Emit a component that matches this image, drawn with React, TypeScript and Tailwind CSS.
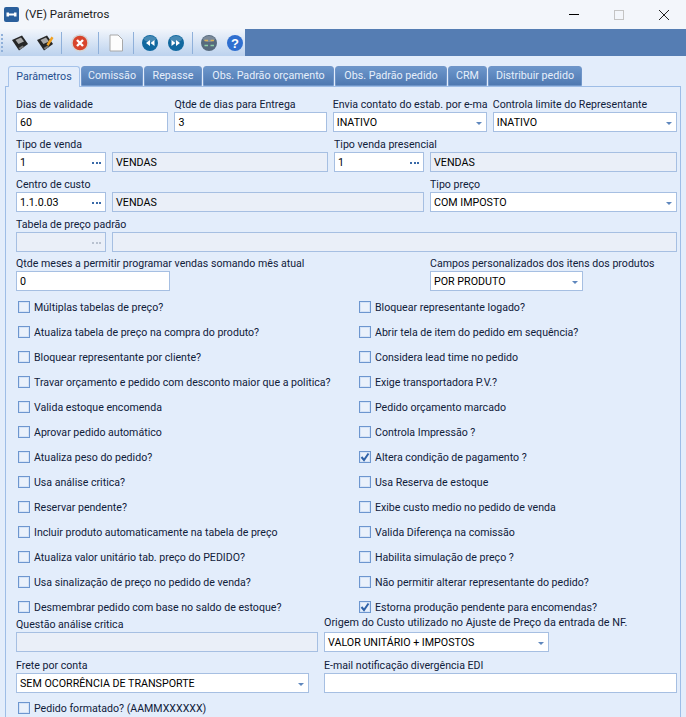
const FONT = "font-['Roboto',sans-serif]";

const TABS = [
  { label: 'Parâmetros', width: 'w-[72px]', active: true },
  { label: 'Comissão', width: 'w-[62px]' },
  { label: 'Repasse', width: 'w-[58px]' },
  { label: 'Obs. Padrão orçamento', width: 'w-[131px]' },
  { label: 'Obs. Padrão pedido', width: 'w-[112px]' },
  { label: 'CRM', width: 'w-[39px]' },
  { label: 'Distribuir pedido', width: 'w-[94px]' },
];

const CHECKS: [string, boolean, string, boolean][] = [
  ['Múltiplas tabelas de preço?', false, 'Bloquear representante logado?', false],
  ['Atualiza tabela de preço na compra do produto?', false, 'Abrir tela de item do pedido em sequência?', false],
  ['Bloquear representante por cliente?', false, 'Considera lead time no pedido', false],
  ['Travar orçamento e pedido com desconto maior que a politica?', false, 'Exige transportadora P.V.?', false],
  ['Valida estoque encomenda', false, 'Pedido orçamento marcado', false],
  ['Aprovar pedido automático', false, 'Controla Impressão ?', false],
  ['Atualiza peso do pedido?', false, 'Altera condição de pagamento ?', true],
  ['Usa análise critica?', false, 'Usa Reserva de estoque', false],
  ['Reservar pendente?', false, 'Exibe custo medio no pedido de venda', false],
  ['Incluir produto automaticamente na tabela de preço', false, 'Valida Diferença na comissão', false],
  ['Atualiza valor unitário tab. preço do PEDIDO?', false, 'Habilita simulação de preço ?', false],
  ['Usa sinalização de preço no pedido de venda?', false, 'Não permitir alterar representante do pedido?', false],
  ['Desmembrar pedido com base no saldo de estoque?', false, 'Estorna produção pendente para encomendas?', true],
];

function Label({ text, className = 'h-[14px]' }: { text: string; className?: string }) {
  return <div className={`text-[10.6px] leading-[14px] whitespace-nowrap text-[#10203a] ${className}`}>{text}</div>;
}

function TextBox({ value = '', disabled = false, className = '' }: { value?: string; disabled?: boolean; className?: string }) {
  return (
    <div className={`flex h-[20px] items-center border border-[#a6bfe2] pl-[3px] pt-[2px] text-[10.7px] text-black ${disabled ? 'bg-[#eaeff8]' : 'bg-white'} ${className}`}>
      {value}
    </div>
  );
}

function SelectBox({ value, className = '' }: { value: string; className?: string }) {
  return (
    <div className={`flex h-[20px] items-center justify-between border border-[#a6bfe2] bg-white pl-[3px] pr-[4px] pt-[2px] text-[10.7px] text-black ${className}`}>
      <span className="whitespace-nowrap">{value}</span>
      <span className="h-0 w-0 border-x-[3px] border-t-[3px] border-x-transparent border-t-[#5f87bd]" />
    </div>
  );
}

function LookupBox({ value = '', disabled = false }: { value?: string; disabled?: boolean }) {
  return (
    <div className={`flex h-[20px] w-[90px] items-center justify-between border border-[#a6bfe2] pl-[3px] pr-[4px] pt-[2px] text-[10.7px] text-black ${disabled ? 'bg-[#eaeff8]' : 'bg-white'}`}>
      <span>{value}</span>
      <span className="flex gap-[1.5px]">
        {[0, 1, 2].map((i) => (
          <span key={i} className={`size-[2px] ${disabled ? 'bg-[#b9c2d0]' : 'bg-[#3a6aa8]'}`} />
        ))}
      </span>
    </div>
  );
}

function Check({ text, checked }: { text: string; checked: boolean }) {
  return (
    <div className="flex h-[14px] items-center gap-[4px] whitespace-nowrap text-[10.6px] text-[#10203a]">
      <span className="flex size-[12px] shrink-0 items-center justify-center border border-[#6d96cf] bg-[#d5e3f7]">
        <span className="flex size-[8px] items-center justify-center bg-[#eaf1fb]">
          {checked && (
            <svg width="10" height="10" viewBox="0 0 10 10" className="shrink-0">
              <path d="M1.5 5 L4 8 L8.5 1.5" fill="none" stroke="#2f62a8" strokeWidth="2" />
            </svg>
          )}
        </span>
      </span>
      <span className="pt-px">{text}</span>
    </div>
  );
}

function Floppy({ pencil = false }: { pencil?: boolean }) {
  return (
    <svg width="18" height="18" viewBox="0 0 18 18">
      <path d="M1 6 L11 1.5 L17 10 L8 16.5 Z" fill="#262626" />
      <path d="M4.5 6 L10 3.5 L13 7.5 L7.5 10 Z" fill="#a8a8a8" />
      <path d="M7.5 14 L11.5 11.5 L13 13 L9 15.5 Z" fill="#777777" />
      {pencil && <path d="M10.5 10.5 L15.5 2.5 L17.5 4 L12.5 12 Z" fill="#f0a020" />}
    </svg>
  );
}

function RoundButton({ fill, children }: { fill: string; children: React.ReactNode }) {
  return (
    <svg width="18" height="18" viewBox="0 0 18 18">
      <circle cx="9" cy="9" r="8" fill={fill} />
      <ellipse cx="9" cy="5" rx="6" ry="3" fill="#ffffff" opacity="0.22" />
      {children}
    </svg>
  );
}

function Toolbar() {
  const Sep = () => <span className="mx-[7px] h-[22px] w-px bg-[#8fb0da]" />;
  return (
    <div className="flex h-[27px] w-full">
      <div className="flex h-full w-[245px] items-center bg-gradient-to-b from-[#f1f5fb] to-[#bcd2ee] pl-[1px]">
        <span className="mr-[8px] flex flex-col gap-[2px]">
          {[0, 1, 2, 3, 4].map((i) => (
            <span key={i} className="size-[2px] bg-[#8fb0da]" />
          ))}
        </span>
        <span className="flex gap-[7px]">
          <Floppy />
          <Floppy pencil />
        </span>
        <Sep />
        <span className="mx-[2px] flex">
          <svg width="18" height="18" viewBox="0 0 18 18">
            <circle cx="9" cy="9" r="8" fill="#d8452c" stroke="#d5d5d5" strokeWidth="1.4" />
            <path d="M6 6 L12 12 M12 6 L6 12" stroke="#fff" strokeWidth="2.4" />
          </svg>
        </span>
        <Sep />
        <span className="mx-[2px] flex">
          <svg width="16" height="18" viewBox="0 0 16 18">
            <path d="M2 1 H10 L14.5 5.5 V17 H2 Z" fill="#fdfdfd" stroke="#a8a8a8" />
          </svg>
        </span>
        <Sep />
        <span className="flex gap-[8px]">
          <RoundButton fill="#11689f">
            <path d="M9 6 L5 9 L9 12 Z M13.5 6 L9.5 9 L13.5 12 Z" fill="#fff" />
          </RoundButton>
          <RoundButton fill="#11689f">
            <path d="M4.5 6 L8.5 9 L4.5 12 Z M9 6 L13 9 L9 12 Z" fill="#fff" />
          </RoundButton>
        </span>
        <Sep />
        <span className="flex gap-[8px]">
          <RoundButton fill="#566a7e">
            <path d="M4.5 6.5 H8 M10.5 6.5 H14" stroke="#d9b25a" strokeWidth="1.4" />
            <path d="M4.5 11.5 L8 11.5 M10.5 11.5 H14" stroke="#8fcfa8" strokeWidth="1.4" />
          </RoundButton>
          <svg width="18" height="18" viewBox="0 0 18 18">
            <circle cx="9" cy="9" r="8" fill="#2f6fd0" />
            <text x="9" y="13.5" textAnchor="middle" fontSize="13" fontWeight="700" fill="#fff" fontFamily="Liberation Sans, sans-serif">?</text>
          </svg>
        </span>
      </div>
      <div className="h-full flex-1 bg-[#557db3]" />
    </div>
  );
}

export default function App() {
  return (
    <div className={`h-[717px] w-[686px] overflow-hidden bg-[#e3edfb] ${FONT}`}>
      {/* Title bar */}
      <div className="flex h-[29px] items-center bg-[#f3f6fb] pl-[4px] pr-[17px]">
        <svg width="15" height="15" viewBox="0 0 15 15" className="shrink-0">
          <rect width="15" height="15" rx="2" fill="#2a5f9c" />
          <path d="M2.5 5.5 H5 V6.5 H10 V5.5 H12.5 V9.5 H10 V8.5 H5 V9.5 H2.5 Z" fill="#fff" />
        </svg>
        <span className="ml-[6px] text-[11.5px] text-[#1a1a1a]">(VE) Parâmetros</span>
        <span className="ml-auto flex items-center gap-[35px]">
          <span className="h-px w-[10px] bg-black" />
          <span className="size-[10px] border border-[#c4c4c4]" />
          <svg width="10" height="10" viewBox="0 0 10 10">
            <path d="M0 0 L10 10 M10 0 L0 10" stroke="#222" strokeWidth="1" />
          </svg>
        </span>
      </div>

      <Toolbar />

      {/* Tabs */}
      <div className="mt-[10px] flex h-[20px] gap-px pl-[8px]">
        {TABS.map((t) => (
          <div
            key={t.label}
            className={`flex ${t.width} items-center justify-center rounded-t-[3px] border pt-px text-[10.7px] ${
              t.active
                ? 'z-10 -mb-px border-[#a6c3ea] border-b-0 bg-[#e3edfb] text-[#1f4f8f]'
                : 'border-[#6f95c8] bg-gradient-to-b from-[#6c96cb] to-[#4f79b1] text-[#e6effb]'
            }`}
          >
            {t.label}
          </div>
        ))}
      </div>

      {/* Panel */}
      <div className="mx-[5px] h-[640px] border border-[#9ebde6] pl-[10px] pr-[3px] pt-[11px]">
        <div className="flex gap-[6px]">
          <div className="w-[153px]"><Label text="Dias de validade" /><TextBox value="60" /></div>
          <div className="w-[153px]"><Label text="Qtde de dias para Entrega" /><TextBox value="3" /></div>
          <div className="w-[154px]"><Label text="Envia contato do estab. por e-ma" /><SelectBox value="INATIVO" /></div>
          <div className="w-[185px]"><Label text="Controla limite do Representante" /><SelectBox value="INATIVO" /></div>
        </div>

        <div className="mt-[6px] flex">
          <div className="w-[312px]">
            <Label text="Tipo de venda" />
            <div className="flex gap-[6px]"><LookupBox value="1" /><TextBox value="VENDAS" disabled className="flex-1" /></div>
          </div>
          <div className="ml-[6px] flex-1">
            <Label text="Tipo venda presencial" />
            <div className="flex gap-[6px]"><LookupBox value="1" /><TextBox value="VENDAS" disabled className="flex-1" /></div>
          </div>
        </div>

        <div className="mt-[6px] flex gap-[6px]">
          <div className="w-[408px]">
            <Label text="Centro de custo" />
            <div className="flex gap-[6px]"><LookupBox value="1.1.0.03" /><TextBox value="VENDAS" disabled className="flex-1" /></div>
          </div>
          <div className="flex-1"><Label text="Tipo preço" /><SelectBox value="COM IMPOSTO" /></div>
        </div>

        <div className="mt-[6px]">
          <Label text="Tabela de preço padrão" />
          <div className="flex gap-[6px]"><LookupBox disabled /><TextBox disabled className="flex-1" /></div>
        </div>

        <div className="mt-[5px] flex gap-[6px]">
          <div className="w-[408px]">
            <Label text="Qtde meses a permitir programar vendas somando mês atual" />
            <TextBox value="0" className="w-[154px]" />
          </div>
          <div>
            <Label text="Campos personalizados dos itens dos produtos" />
            <SelectBox value="POR PRODUTO" className="w-[153px]" />
          </div>
        </div>

        <div className="mt-[9px] flex flex-col gap-[11px] pl-[2px]">
          {CHECKS.map(([left, leftOn, right, rightOn]) => (
            <div key={left} className="flex">
              <div className="w-[341px]"><Check text={left} checked={leftOn} /></div>
              <Check text={right} checked={rightOn} />
            </div>
          ))}
        </div>

        <div className="mt-[4px] flex gap-[6px]">
          <div className="w-[302px]"><Label text="Questão análise critica" /><TextBox disabled /></div>
          <div className="-mt-[2px]"><Label text="Origem do Custo utilizado no Ajuste de Preço da entrada de NF." className="h-[16px] text-[10.8px]" /><SelectBox value="VALOR UNITÁRIO + IMPOSTOS" className="w-[225px]" /></div>
        </div>

        <div className="mt-[7px] flex gap-[15px]">
          <div className="w-[293px]"><Label text="Frete por conta" /><SelectBox value="SEM OCORRÊNCIA DE TRANSPORTE" /></div>
          <div className="w-[353px]"><Label text="E-mail notificação divergência EDI" /><TextBox /></div>
        </div>

        <div className="mt-[8px] pl-[2px]"><Check text="Pedido formatado? (AAMMXXXXXX)" checked={false} /></div>
      </div>
    </div>
  );
}
